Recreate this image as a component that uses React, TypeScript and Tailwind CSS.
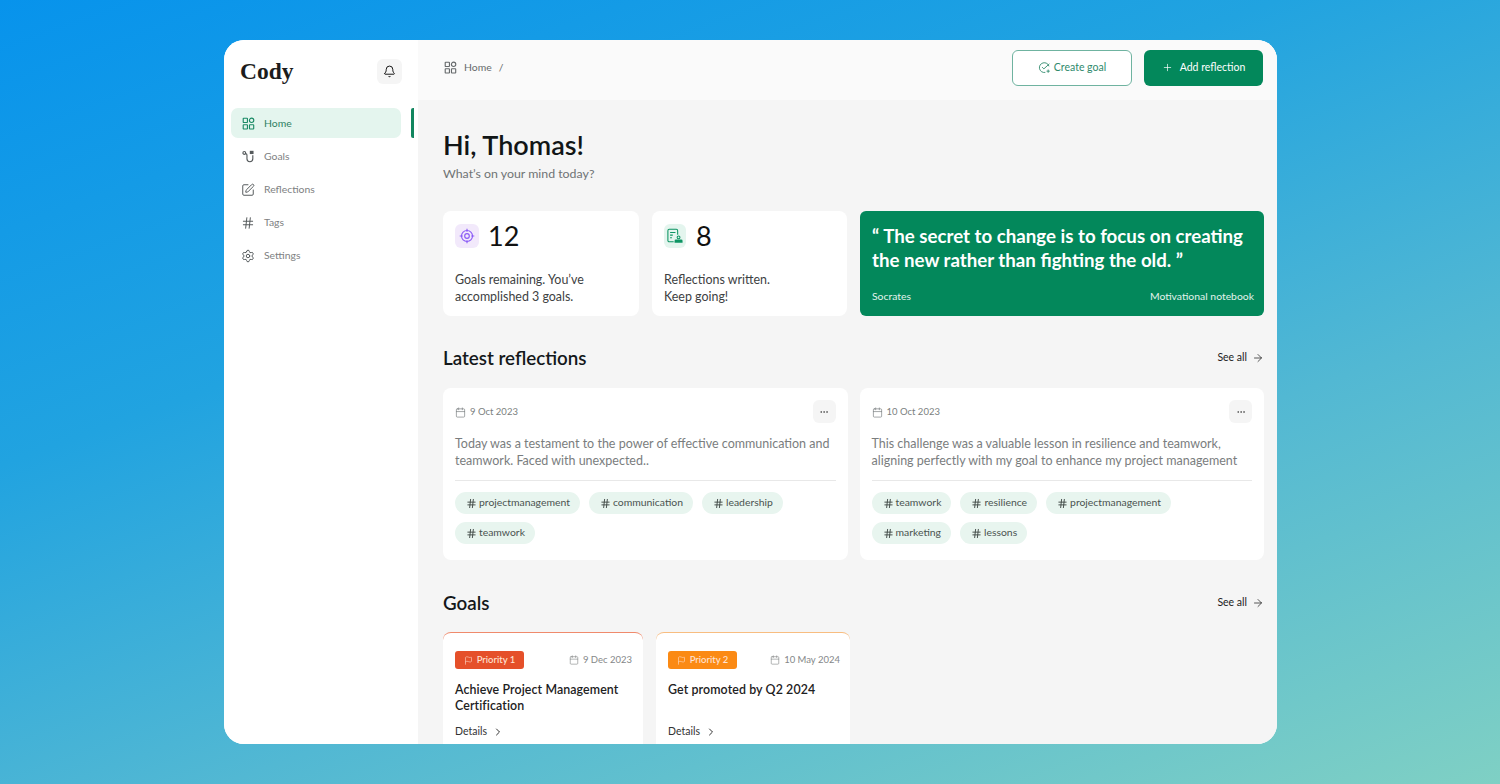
import React from "react";
import { Bell, Settings, Hash, SquarePen, Plus, ArrowRight, ChevronRight, Ellipsis, Calendar, Flag } from "lucide-react";

const GridIcon = ({ className }: { className?: string }) => (
  <svg viewBox="0 0 16 16" fill="none" stroke="currentColor" strokeWidth="1.4" className={className}>
    <rect x="1.5" y="1.5" width="5.2" height="5.2" rx="0.6" />
    <circle cx="11.8" cy="4.1" r="2.7" />
    <rect x="1.5" y="9.5" width="5.2" height="5.2" rx="0.6" />
    <rect x="9.2" y="9.5" width="5.2" height="5.2" rx="0.6" />
  </svg>
);

const GoalsIcon = ({ className }: { className?: string }) => (
  <svg viewBox="0 0 16 16" fill="none" stroke="currentColor" strokeWidth="1.4" className={className}>
    <circle cx="2.8" cy="3.6" r="1.7" />
    <path d="M4.5 4.2c1 .4 1.6 1 1.6 2v4.6a3.6 3.6 0 0 0 7.2 0V6.5" />
    <rect x="9.6" y="1" width="4.6" height="4" fill="currentColor" stroke="none" />
  </svg>
);

const TargetIcon = () => (
  <svg viewBox="0 0 18 18" fill="none" stroke="#8b5cf6" strokeWidth="1.3" className="w-[16px] h-[16px]">
    <circle cx="9" cy="9" r="6.2" />
    <circle cx="9" cy="9" r="2.6" />
    <path d="M9 0.8v3.4M9 13.8v3.4M0.8 9h3.4M13.8 9h3.4" />
  </svg>
);

const NoteIcon = () => (
  <svg viewBox="0 0 18 18" fill="none" stroke="#0d9463" strokeWidth="1.2" className="w-[16px] h-[16px]">
    <path d="M7.5 15.5H2.5a1.5 1.5 0 0 1-1.5-1.5V3a1.5 1.5 0 0 1 1.5-1.5h8A1.5 1.5 0 0 1 12 3v4.5" />
    <path d="M3.5 5h6M3.5 8h3M3.5 11h2" />
    <circle cx="13" cy="10.5" r="1.6" fill="none" />
    <path d="M8.5 16.5v-2a1.5 1.5 0 0 1 1.5-1.5h6a1.5 1.5 0 0 1 1.5 1.5v2z" fill="#0d9463" stroke="none" />
  </svg>
);

const CheckPlus = () => (
  <svg viewBox="0 0 16 16" fill="none" stroke="currentColor" strokeWidth="1.1" className="w-[13px] h-[13px]">
    <path d="M13.5 6.5A6 6 0 1 0 9 14" />
    <path d="M5 7.5l2.2 2.2L14 3.5" />
    <path d="M12.5 10.5v4M10.5 12.5h4" />
  </svg>
);

const nav = [
  { label: "Home", Icon: GridIcon, active: true, size: "w-[13px] h-[13px]" },
  { label: "Goals", Icon: GoalsIcon, size: "w-[13px] h-[13px]" },
  { label: "Reflections", Icon: SquarePen, size: "w-[14px] h-[14px]" },
  { label: "Tags", Icon: Hash, size: "w-[14px] h-[14px]" },
  { label: "Settings", Icon: Settings, size: "w-[14px] h-[14px]" },
];

const Tag = ({ t }: { t: string }) => (
  <span className="h-[22px] rounded-full bg-[#e8f5ef] pl-[11px] pr-[10px] flex items-center gap-[2px] text-[10.4px] text-[#4a5350]">
    <Hash className="w-[11px] h-[11px] text-[#3c4542]" strokeWidth={2} />
    {t}
  </span>
);

const Reflection = ({ date, text, tags }: { date: string; text: React.ReactNode; tags: string[] }) => (
  <div className="bg-white rounded-[8px] h-[172px] flex-1 px-[12px] pt-[12px]">
    <div className="flex items-center justify-between h-[23px]">
      <div className="flex items-center gap-[4px] text-[9.5px] text-[#7b7f80] pt-[1px]">
        <Calendar className="w-[11px] h-[11px]" strokeWidth={1.5} />
        {date}
      </div>
      <div className="w-[23px] h-[23px] rounded-[6px] bg-[#f5f5f5] flex items-center justify-center">
        <Ellipsis className="w-[10px] h-[10px] text-[#555]" />
      </div>
    </div>
    <p className="mt-[13px] text-[12.5px] leading-[16.5px] text-[#7a7d7e]">{text}</p>
    <div className="mt-[11px] border-t border-[#e8e8e8] pt-[11px] flex flex-wrap gap-x-[9px] gap-y-[8px]">
      {tags.map((t) => (
        <Tag key={t} t={t} />
      ))}
    </div>
  </div>
);

const Goal = ({ color, bar, label, date, title, width, pad }: { color: string; bar: string; label: string; date: string; title: React.ReactNode; width: string; pad: string }) => (
  <div className={`${width} ${bar} ${pad} bg-white rounded-t-[8px] border-t h-[112px] pl-[12px] pt-[18px]`}>
    <div className="flex items-center justify-between">
      <span className={`${color} h-[18px] w-[69px] rounded-[3px] flex items-center justify-center gap-[4px] text-[9.5px] font-medium text-[#ffe3d4]`}>
        <Flag className="w-[9px] h-[9px]" strokeWidth={1.5} />
        {label}
      </span>
      <span className="flex items-center gap-[4px] text-[9.5px] text-[#858889]">
        <Calendar className="w-[10px] h-[10px]" strokeWidth={1.5} />
        {date}
      </span>
    </div>
    <p className="mt-[12.5px] h-[33px] text-[12.4px] leading-[16.5px] tracking-[0.1px] font-semibold text-[#1d2122]">{title}</p>
    <div className="mt-[9.5px] flex items-center gap-[5px] text-[10.5px] text-[#333]">
      Details
      <ChevronRight className="w-[12px] h-[12px]" strokeWidth={2} />
    </div>
  </div>
);

const Heading = ({ title }: { title: string }) => (
  <div className="flex items-center justify-between">
    <h2 className="text-[18.8px] leading-[22px] font-semibold text-[#14181a]">{title}</h2>
    <span className="flex items-center gap-[5px] text-[10.5px] text-[#222]">
      See all
      <ArrowRight className="w-[12px] h-[12px]" strokeWidth={1.5} />
    </span>
  </div>
);

export default function App() {
  return (
    <div className="h-[784px] w-full overflow-hidden pt-[40px] pl-[224px] bg-[linear-gradient(160deg,#0793ec_0%,#21a3e0_35%,#52b8d3_65%,#7fd0c4_100%)] font-['Lato','Noto_Sans',sans-serif]">
      <div className="w-[1053px] h-[704px] rounded-[20px] overflow-hidden flex bg-white">
        <aside className="w-[194px] shrink-0 bg-white">
          <div className="h-[60px] flex items-center justify-between pl-[16px] pr-[16px] pt-[3px]">
            <span className="font-['Liberation_Serif',serif] font-bold text-[23.5px] text-[#1c1c1c] leading-none pt-[1px]">Cody</span>
            <span className="w-[25px] h-[25px] rounded-[6px] bg-[#f5f5f5] flex items-center justify-center">
              <Bell className="w-[13px] h-[13px] text-[#111]" strokeWidth={1.8} />
            </span>
          </div>
          <nav className="mt-[8px] flex flex-col gap-[3px]">
            {nav.map(({ label, Icon, active, size }) => (
              <div key={label} className="relative pl-[7px] pr-[17px]">
                <div className={`h-[30px] rounded-[7px] flex items-center gap-[9px] pl-[10px] pt-[1px] text-[10.4px] ${active ? "bg-[#e4f5ee] text-[#2f7f63]" : "text-[#7e8182]"}`}>
                  <span className="w-[14px] h-[14px] flex items-center justify-center">
                    <Icon className={`${size} ${active ? "text-[#1a8a65]" : "text-[#555a5c]"}`} strokeWidth={1.7} />
                  </span>
                  {label}
                </div>
                {active && <span className="absolute right-[4px] top-0 w-[3px] h-[30px] rounded-l-[2px] bg-[#12865f]" />}
              </div>
            ))}
          </nav>
        </aside>

        <main className="flex-1 bg-[#f5f5f5]">
          <header className="h-[60px] bg-[#fafafa] flex items-center justify-between pl-[26px] pr-[14px] pb-[5px]">
            <div className="flex items-center gap-[7px] text-[10.4px] text-[#666a6c] pt-[1px]">
              <GridIcon className="w-[13px] h-[13px] text-[#666a6c]" />
              <span>Home</span>
              <span>/</span>
            </div>
            <div className="flex items-center gap-[12px]">
              <button className="w-[120px] h-[36px] rounded-[6px] border border-[#6fb3a0] bg-white flex items-center justify-center gap-[3px] text-[10.5px] text-[#2f8a6c]">
                <CheckPlus />
                Create goal
              </button>
              <button className="w-[119px] h-[36px] rounded-[6px] bg-[#03885b] flex items-center justify-center gap-[7px] text-[10.5px] text-white">
                <Plus className="w-[11px] h-[11px]" strokeWidth={1.5} />
                Add reflection
              </button>
            </div>
          </header>

          <div className="pl-[25px] pr-[13px]">
            <h1 className="mt-[29px] text-[27px] leading-[32px] font-semibold text-[#111516]">Hi, Thomas!</h1>
            <p className="mt-[5px] text-[12.35px] leading-[16px] text-[#6f7374]">What’s on your mind today?</p>

            <div className="mt-[29px] flex gap-[13px] h-[105px]">
              <div className="w-[196px] bg-white rounded-[8px] px-[12px] pt-[13px]">
                <div className="flex items-center gap-[9px]">
                  <span className="w-[24px] h-[24px] rounded-[6px] bg-[#f2e9fb] flex items-center justify-center"><TargetIcon /></span>
                  <span className="text-[27px] leading-[24px] text-[#111]">12</span>
                </div>
                <p className="mt-[24px] text-[12.45px] leading-[16.5px] text-[#3d4142]">Goals remaining. You’ve<br />accomplished 3 goals.</p>
              </div>
              <div className="w-[195px] bg-white rounded-[8px] px-[12px] pt-[13px]">
                <div className="flex items-center gap-[10px]">
                  <span className="w-[22px] h-[24px] rounded-[6px] bg-[#e4f5ee] flex items-center justify-center"><NoteIcon /></span>
                  <span className="text-[27px] leading-[24px] text-[#111]">8</span>
                </div>
                <p className="mt-[24px] text-[12.45px] leading-[16.5px] text-[#3d4142]">Reflections written.<br />Keep going!</p>
              </div>
              <div className="flex-1 bg-[#03885b] rounded-[6px] pl-[12px] pr-[10px] pt-[13px] text-white">
                <p className="text-[18.7px] leading-[24px] font-bold">“ The secret to change is to focus on creating<br />the new rather than fighting the old. ”</p>
                <div className="mt-[17px] flex justify-between text-[10.4px] leading-[14px] text-[#e2f3ec]">
                  <span>Socrates</span>
                  <span>Motivational notebook</span>
                </div>
              </div>
            </div>

            <div className="mt-[31px]"><Heading title="Latest reflections" /></div>
            <div className="mt-[19px] flex gap-[12px]">
              <Reflection
                date="9 Oct 2023"
                text={<>Today was a testament to the power of effective communication and<br />teamwork. Faced with unexpected..</>}
                tags={["projectmanagement", "communication", "leadership", "teamwork"]}
              />
              <Reflection
                date="10 Oct 2023"
                text={<>This challenge was a valuable lesson in resilience and teamwork,<br />aligning perfectly with my goal to enhance my project management</>}
                tags={["teamwork", "resilience", "projectmanagement", "marketing", "lessons"]}
              />
            </div>

            <div className="mt-[32px]"><Heading title="Goals" /></div>
            <div className="mt-[18px] flex gap-[13px]">
              <Goal width="w-[200px]" pad="pr-[11px]" bar="border-[#f08a6c]" color="bg-[#e5502a]" label="Priority 1" date="9 Dec 2023" title={<>Achieve Project Management<br />Certification</>} />
              <Goal width="w-[194px]" pad="pr-[10px]" bar="border-[#f8bd80]" color="bg-[#fb8a14]" label="Priority 2" date="10 May 2024" title="Get promoted by Q2 2024" />
            </div>
          </div>
        </main>
      </div>
    </div>
  );
}
